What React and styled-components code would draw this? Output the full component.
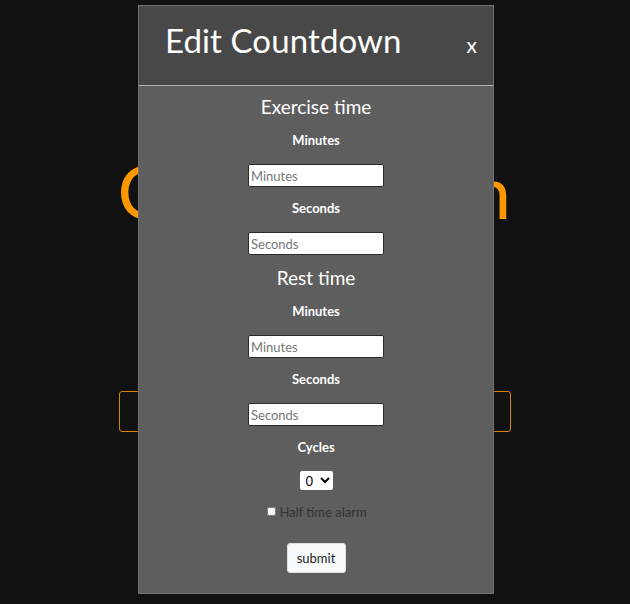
import React from "react";
import styled, { createGlobalStyle } from "styled-components";

const Global = createGlobalStyle`
  html, body { margin: 0; padding: 0; background: #111111; }
  body { font-family: "Lato", "Open Sans", sans-serif; }
  * { box-sizing: border-box; }
`;

const Page = styled.div`
  width: 630px;
  height: 604px;
  position: relative;
  overflow: hidden;
  display: flex;
  flex-direction: column;
  align-items: center;
`;

const BigTitle = styled.div`
  margin-top: 146px;
  height: 90px;
  font-size: 74px;
  line-height: 90px;
  color: #ff9800;
  font-family: "Lato", sans-serif;
  font-weight: 400;
  letter-spacing: 1.5px;
  white-space: nowrap;
`;

const OrangeBox = styled.div`
  margin-top: 155px;
  width: 392px;
  height: 41px;
  border: 1px solid #d98200;
  border-radius: 3px;
`;

const Modal = styled.div`
  position: absolute;
  left: 138px;
  top: 5px;
  width: 356px;
  height: 589px;
  background: #5e5e5e;
  border: 1px solid #707070;
  display: flex;
  flex-direction: column;
  color: #ffffff;
`;

const Header = styled.div`
  height: 80px;
  background: #484848;
  border-bottom: 1px solid #b4b4b4;
  display: flex;
  align-items: center;
  justify-content: space-between;
  padding: 0 16px 12px 26px;
`;

const ModalTitle = styled.h1`
  margin: 0;
  font-size: 33px;
  font-weight: 400;
  font-family: "Lato", sans-serif;
  letter-spacing: 0.1px;
`;

const Close = styled.span`
  font-size: 21px;
  margin-top: 10px;
`;

const Body = styled.div`
  display: flex;
  flex-direction: column;
  align-items: center;
  padding-top: 9px;
`;

const Heading = styled.h2`
  margin: ${(p) => (p.$first ? "0" : "11px")} 0 0;
  height: 24px;
  line-height: 24px;
  font-size: 19px;
  font-weight: 400;
`;

const Label = styled.label`
  margin: 11px 0 14px;
  height: 20px;
  line-height: 20px;
  font-size: 13px;
  font-weight: 700;
`;

const Input = styled.input`
  width: 136px;
  height: 23px;
  border: 1px solid #2b2b2b;
  border-radius: 2px;
  background: #fff;
  padding: 0 2px;
  font-size: 13px;
  font-family: "Lato", sans-serif;
  outline: none;
  &::placeholder { color: #777; }
`;

const Select = styled.select`
  width: 33px;
  height: 19px;
  font-size: 13px;
  font-family: "Lato", sans-serif;
  border: none;
  border-radius: 2px;
  background: #fff;
  padding: 0 0 0 2px;
`;

const CheckRow = styled.div`
  margin-top: 12px;
  height: 20px;
  display: flex;
  align-items: center;
  gap: 3px;
  font-size: 13px;
  color: #333;
  margin-left: 2px;
`;

const Check = styled.input`
  width: 9px;
  height: 9px;
  margin: 0 0 2px;
`;

const Submit = styled.button`
  margin-top: 21px;
  width: 59px;
  height: 30px;
  background: #f8f9fa;
  border: 1px solid #e0e0e0;
  border-radius: 3px;
  font-size: 13px;
  font-family: "Lato", sans-serif;
  color: #222;
`;

export default function App() {
  return (
    <Page>
      <Global />
      <BigTitle>Countdown</BigTitle>
      <OrangeBox />
      <Modal>
        <Header>
          <ModalTitle>Edit Countdown</ModalTitle>
          <Close>x</Close>
        </Header>
        <Body>
          <Heading $first>Exercise time</Heading>
          <Label>Minutes</Label>
          <Input placeholder="Minutes" />
          <Label>Seconds</Label>
          <Input placeholder="Seconds" />
          <Heading>Rest time</Heading>
          <Label>Minutes</Label>
          <Input placeholder="Minutes" />
          <Label>Seconds</Label>
          <Input placeholder="Seconds" />
          <Label>Cycles</Label>
          <Select defaultValue="0">
            <option>0</option>
            <option>1</option>
            <option>2</option>
          </Select>
          <CheckRow>
            <Check type="checkbox" />
            <span>Half time alarm</span>
          </CheckRow>
          <Submit>submit</Submit>
        </Body>
      </Modal>
    </Page>
  );
}
